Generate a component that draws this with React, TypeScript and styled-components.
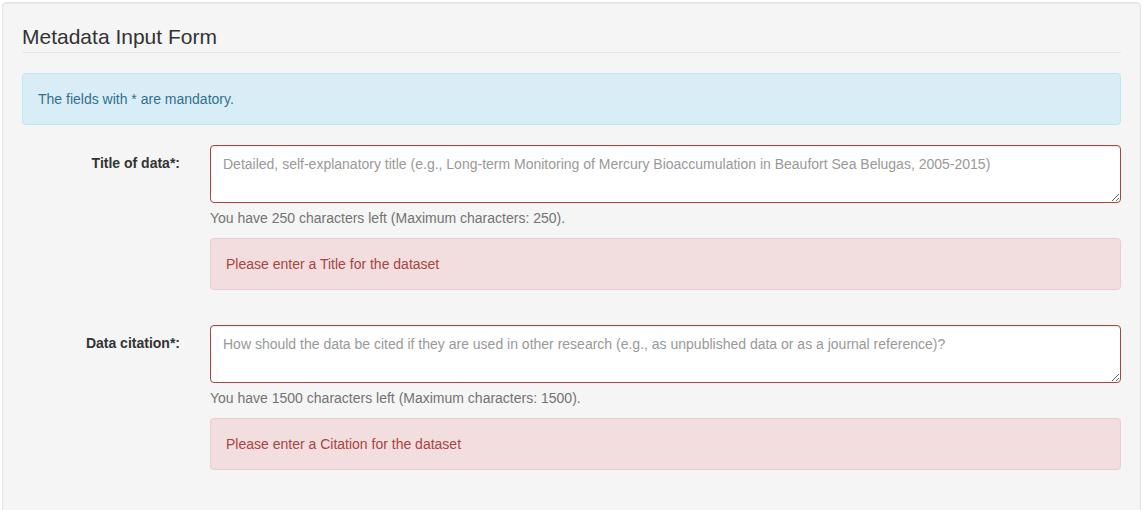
import React from 'react';
import styled, { createGlobalStyle } from 'styled-components';

const GlobalStyle = createGlobalStyle`
  html, body {
    margin: 0;
    padding: 0;
    background: #ffffff;
  }
  body {
    font-family: "Liberation Sans", Arial, Helvetica, sans-serif;
    font-size: 14px;
    line-height: 1.42857;
    color: #333333;
  }
  * {
    box-sizing: border-box;
  }
`;

interface Field {
  id: string;
  label: string;
  placeholder: string;
  max: number;
  error: string;
}

const fields: Field[] = [
  {
    id: 'title',
    label: 'Title of data*:',
    placeholder:
      'Detailed, self-explanatory title (e.g., Long-term Monitoring of Mercury Bioaccumulation in Beaufort Sea Belugas, 2005-2015)',
    max: 250,
    error: 'Please enter a Title for the dataset',
  },
  {
    id: 'citation',
    label: 'Data citation*:',
    placeholder:
      'How should the data be cited if they are used in other research (e.g., as unpublished data or as a journal reference)?',
    max: 1500,
    error: 'Please enter a Citation for the dataset',
  },
];

const App: React.FC = () => {
  return (
    <Page>
      <GlobalStyle />
      <Well>
        <Legend>Metadata Input Form</Legend>
        <Alert $variant="info">The fields with * are mandatory.</Alert>
        {fields.map((field) => (
          <FormGroup key={field.id}>
            <Label htmlFor={field.id}>{field.label}</Label>
            <Controls>
              <TextArea id={field.id} rows={2} placeholder={field.placeholder} maxLength={field.max} />
              <HelpBlock>
                You have {field.max} characters left (Maximum characters: {field.max}).
              </HelpBlock>
              <Alert $variant="danger">{field.error}</Alert>
            </Controls>
          </FormGroup>
        ))}
      </Well>
    </Page>
  );
};

const Page = styled.div`
  padding: 2px 2px 0 2px;
`;

const Well = styled.div`
  min-height: 540px;
  padding: 19px;
  background: #f5f5f5;
  border: 1px solid #e3e3e3;
  border-radius: 4px;
  box-shadow: inset 0 1px 1px rgba(0, 0, 0, 0.05);
`;

const Legend = styled.div`
  font-size: 21px;
  line-height: 30px;
  color: #333333;
  border-bottom: 1px solid #e5e5e5;
  margin-bottom: 20px;
`;

const Alert = styled.div<{ $variant: 'info' | 'danger' }>`
  padding: 15px;
  margin-bottom: 20px;
  border: 1px solid ${({ $variant }) => ($variant === 'info' ? '#bce8f1' : '#ebccd1')};
  border-radius: 4px;
  background: ${({ $variant }) => ($variant === 'info' ? '#d9edf7' : '#f2dede')};
  color: ${({ $variant }) => ($variant === 'info' ? '#31708f' : '#a94442')};
  font-size: 14px;
  line-height: 20px;
`;

const FormGroup = styled.div`
  display: grid;
  grid-template-columns: 158px 1fr;
  column-gap: 30px;
  margin-bottom: 15px;
`;

const Label = styled.label`
  padding-top: 8px;
  text-align: right;
  font-weight: 700;
  color: #333333;
  line-height: 20px;
`;

const Controls = styled.div`
  display: flex;
  flex-direction: column;
  min-width: 0;
`;

const TextArea = styled.textarea`
  display: block;
  width: 100%;
  height: 58px;
  padding: 8px 12px 4px;
  font-family: inherit;
  font-size: 14px;
  line-height: 20px;
  color: #555555;
  background: #ffffff;
  border: 1px solid #a94442;
  border-radius: 4px;
  box-shadow: inset 0 1px 1px rgba(0, 0, 0, 0.075);
  resize: vertical;
  outline: none;

  &::placeholder {
    color: #999999;
  }
`;

const HelpBlock = styled.span`
  display: block;
  margin-top: 5px;
  margin-bottom: 10px;
  color: #737373;
  line-height: 20px;
`;

export default App;
